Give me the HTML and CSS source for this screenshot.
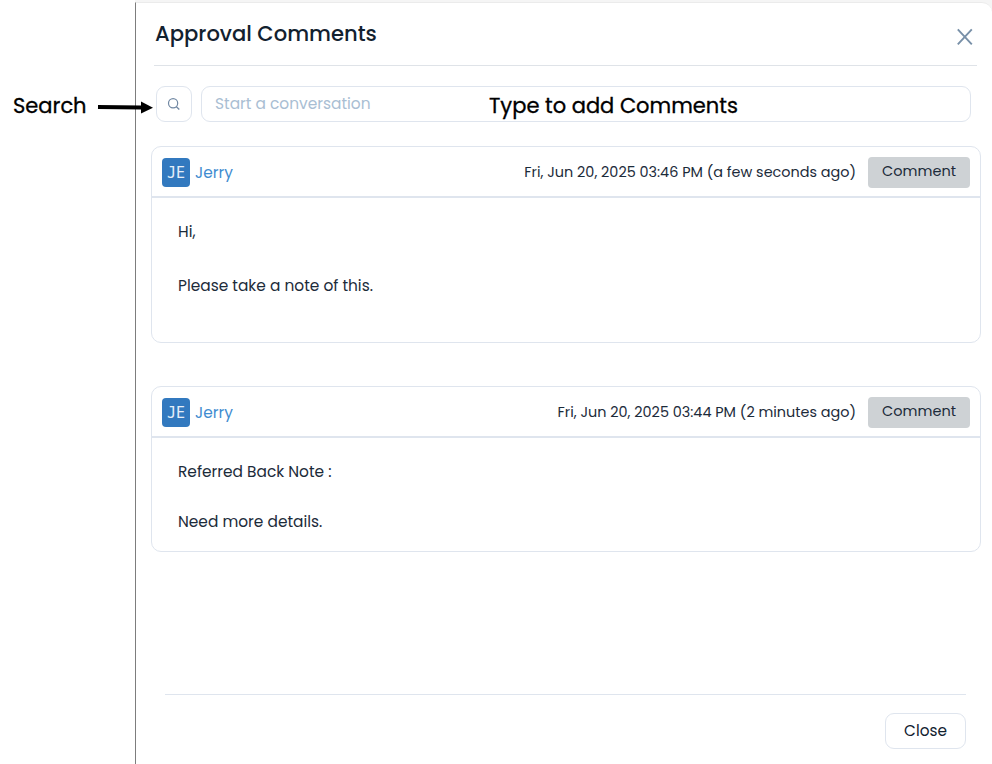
FILE: index.html
```html
<!DOCTYPE html>
<html lang="en">
<head>
    <meta charset="UTF-8">
    <meta name="viewport" content="width=device-width, initial-scale=1.0">
    <title>Approval Comments</title>
    <link rel="stylesheet" href="styles.css">
</head>
<body>

<div class="side-note">
    <span class="note-text">Search</span>
</div>

<div class="drawer">
    <div class="drawer-panel">
        <div class="drawer-header">
            <h2>Approval Comments</h2>
            <svg class="close-icon" width="16" height="18" viewBox="0 0 16 18">
                <path d="M.8 1.3L14.8 16.3M14.8 1.3L.8 16.3" fill="none" stroke="#7890a8" stroke-width="1.9"/>
            </svg>
        </div>

        <div class="toolbar">
            <button class="search-button" aria-label="Search">
                <svg width="14" height="14" viewBox="0 0 14 14">
                    <circle cx="6.1" cy="6.3" r="4.6" fill="none" stroke="#7188a3" stroke-width="1.2"/>
                    <path d="M9.4 9.7L12.3 12.5" fill="none" stroke="#7188a3" stroke-width="1.3"/>
                </svg>
            </button>
            <div class="input-wrap">
                <span class="placeholder">Start a conversation</span>
                <span class="note-text note-input">Type to add Comments</span>
            </div>
        </div>

        <div class="comment comment-first">
            <div class="comment-header">
                <span class="avatar">JE</span>
                <span class="author">Jerry</span>
                <span class="date">Fri, Jun 20, 2025 03:46 PM (a few seconds ago)</span>
                <span class="tag">Comment</span>
            </div>
            <div class="comment-body">
                <p>Hi,</p>
                <p class="take-note">Please take a note of this.</p>
            </div>
        </div>

        <div class="comment comment-second">
            <div class="comment-header">
                <span class="avatar">JE</span>
                <span class="author">Jerry</span>
                <span class="date">Fri, Jun 20, 2025 03:44 PM (2 minutes ago)</span>
                <span class="tag">Comment</span>
            </div>
            <div class="comment-body">
                <p>Referred Back Note :</p>
                <p class="details">Need more details.</p>
            </div>
        </div>

        <div class="drawer-footer">
            <button class="close-button">Close</button>
        </div>
    </div>
</div>

<svg class="arrow" width="58" height="14" viewBox="0 0 58 14">
    <path d="M1 7L44 7.6" fill="none" stroke="#000" stroke-width="4"/>
    <path d="M44 1.5L56 7.8L44 13.5Z" fill="#000"/>
</svg>

</body>
</html>
```

FILE: styles.css
```css
* {
    box-sizing: border-box;
}
body {
    display: flex;
    height: 764px;
    margin: 0;
    overflow: hidden;
    background: #fff;
    color: #1c2b3a;
    font-family: Poppins, Inter, sans-serif;
    font-size: 15px;
}
h2, p {
    margin: 0;
    white-space: nowrap;
}
button {
    padding: 0;
    border: 1px solid #dfe5ee;
    background: #fff;
    color: #12212f;
    font: inherit;
}
.side-note {
    width: 135px;
    padding: 91px 0 0 13px;
}
.note-text {
    color: #000;
    font-size: 21px;
    font-weight: 400;
    line-height: 30px;
    white-space: nowrap;
    -webkit-text-stroke: 0.3px #000;
}
.note-input {
    margin-top: 3px;
}
.drawer {
    flex: 1;
    padding-top: 2px;
    background: #f5f5f5;
}
.drawer-panel {
    display: flex;
    flex-direction: column;
    height: 762px;
    padding: 0 11px 15px 15px;
    border-top: 1px solid #ebebeb;
    border-left: 1px solid #7d7d7d;
    border-top-right-radius: 10px;
    background: #fff;
}
.drawer-header {
    display: flex;
    justify-content: space-between;
    height: 63px;
    margin: 0 4px 0 3px;
    padding: 16px 4px 0 1px;
    border-bottom: 1px solid #dfe3e8;
}
h2 {
    color: #12212f;
    font-size: 21.1px;
    font-weight: 500;
    line-height: 30px;
}
.close-icon {
    margin-top: 9px;
}
.toolbar {
    display: flex;
    gap: 9px;
    height: 36px;
    margin: 20px 10px 24px 5px;
}
.search-button {
    display: flex;
    align-items: center;
    justify-content: center;
    width: 36px;
    border-radius: 9px;
}
.input-wrap {
    display: flex;
    flex: 1;
    align-items: center;
    border: 1px solid #dfe5ee;
    border-radius: 9px;
    padding-left: 13px;
}
.placeholder {
    width: 274px;
    margin-top: -2px;
    color: #a9bed3;
    font-size: 15.4px;
}
.comment {
    border: 1px solid #dfe5ee;
    border-radius: 10px;
}
.comment-first {
    height: 197px;
    margin-bottom: 43px;
}
.comment-second {
    height: 166px;
}
.comment-header {
    display: flex;
    align-items: center;
    height: 51px;
    padding: 0 10px;
    border-bottom: 2px solid #dfe5ee;
}
.avatar {
    width: 28px;
    height: 29px;
    margin-top: 1px;
    border-radius: 4px;
    background: #3279bf;
    color: #e4eef8;
    font-family: "DejaVu Sans Mono", monospace;
    font-size: 15px;
    line-height: 31px;
    text-align: center;
}
.author {
    margin: 1px auto 0 5px;
    color: #3f8cd0;
    font-size: 15.4px;
}
.date {
    margin-top: 2px;
    font-size: 14.4px;
    white-space: nowrap;
}
.tag {
    width: 102px;
    height: 31px;
    margin: 1px 0 0 12px;
    border-radius: 4px;
    background: #ced2d5;
    font-size: 14.5px;
    line-height: 28px;
    text-align: center;
}
.comment-body {
    padding: 22px 0 0 26px;
    font-size: 15.4px;
    line-height: 24px;
}
.take-note {
    margin-top: 30px;
}
.details {
    margin-top: 26px;
}
.drawer-footer {
    display: flex;
    justify-content: flex-end;
    margin: auto 15px 0 14px;
    padding-top: 18px;
    border-top: 1px solid #dfe5ee;
}
.close-button {
    width: 81px;
    height: 36px;
    padding-bottom: 2px;
    border-radius: 9px;
    font-size: 15.3px;
}
.arrow {
    position: absolute;
    top: 100px;
    left: 97px;
}
```
